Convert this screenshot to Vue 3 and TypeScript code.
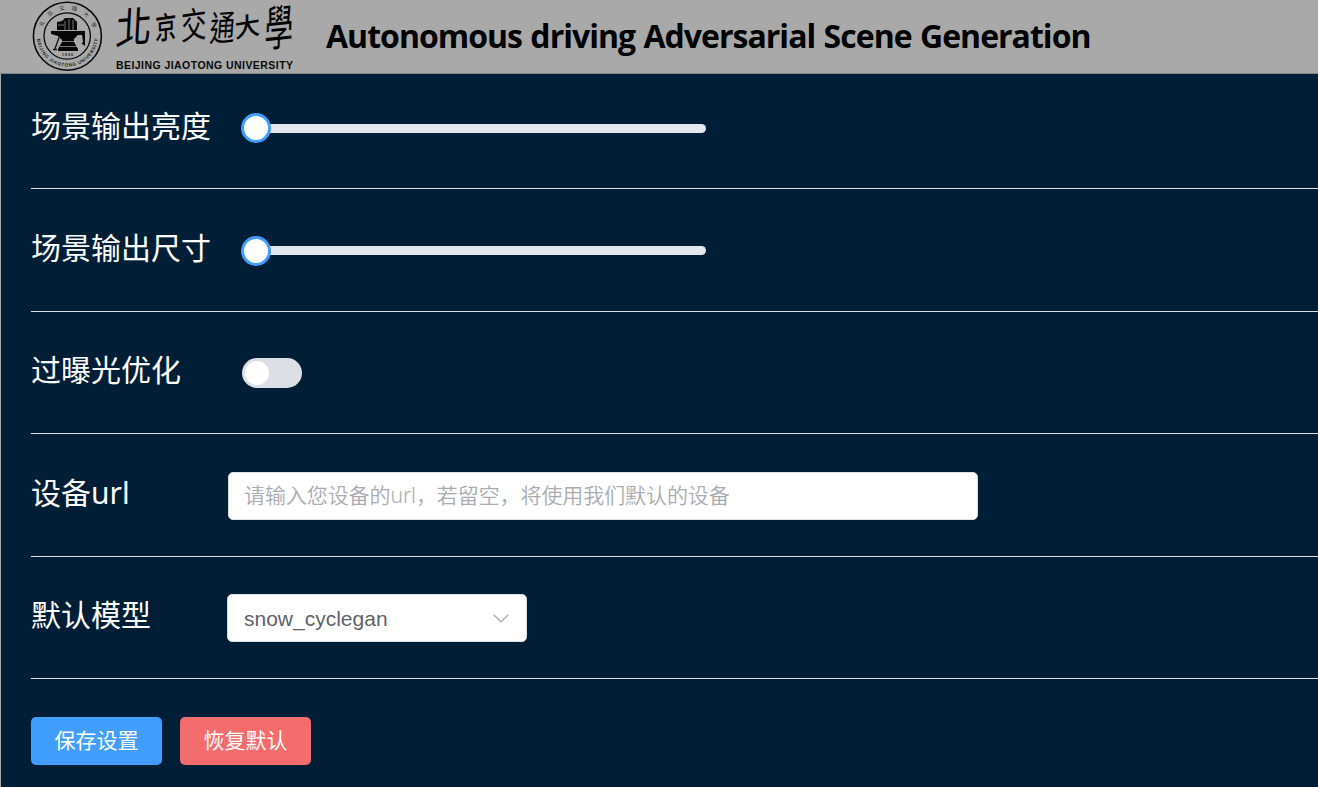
<script setup lang="ts">
import { ref } from 'vue'

const brightness = ref(0)
const size = ref(0)
const overexposure = ref(false)
const deviceUrl = ref('')
const model = ref('snow_cyclegan')

function save(): void {
  console.log(brightness.value, size.value, overexposure.value, deviceUrl.value, model.value)
}

function reset(): void {
  brightness.value = 0
  size.value = 0
  overexposure.value = false
  deviceUrl.value = ''
  model.value = 'snow_cyclegan'
}
</script>

<template>
  <div class="page">
    <header class="header">
      <svg class="logo" width="300" height="73" viewBox="0 0 300 73">
        <defs>
          <path id="seal-bottom" d="M36.9 36 A30.5 30.5 0 0 0 97.9 36" />
          <path id="seal-top" d="M41 36 A26.5 26.5 0 0 1 94 36" />
        </defs>
        <g fill="none" stroke="#0b0b0b">
          <circle cx="67.4" cy="36.2" r="34" stroke-width="1.6" />
          <circle cx="67.2" cy="36" r="23.2" stroke-width="1.3" />
        </g>
        <text class="seal-en"><textPath href="#seal-bottom" startOffset="3" textLength="90">BEIJING JIAOTONG UNIVERSITY</textPath></text>
        <text class="seal-cn"><textPath href="#seal-top" startOffset="9" textLength="66">北京交通大學</textPath></text>
        <g fill="#070707">
          <path d="M57 22 L62 21 L65 18 L73 18 L77 22 L77 30 L57 30 Z" />
          <path d="M51 31 H85 V35 H78 L74 39 V42 L78 49 V51 H58 V49 L62 42 V40 L58 36 L51 34 Z" />
          <path d="M82 34 H85 V46 L81.5 43.5 L83 42 Z" />
        </g>
        <path d="M60 35 L54.5 50 M53 49.5 H57" stroke="#111" stroke-width="1.3" fill="none" />
        <path d="M65 21 V30 M69 19 V30 M73 20 V30 M62 41.5 H75 M60 46.5 H77 M58 25 H64" stroke="#a9a9a9" stroke-width=".7" />
        <text x="62" y="55.6" class="year">1896</text>
        <g class="brush">
          <text transform="translate(115 44.5) rotate(-5) skewX(-8) scale(.88 1.04)" font-size="41">北</text>
          <text transform="translate(155 40) rotate(-8) skewX(-8) scale(.72 1)" font-size="30" font-weight="500">京</text>
          <text transform="translate(181 40) rotate(-8) skewX(-8) scale(.76 1.05)" font-size="34">交</text>
          <text transform="translate(209 41.5) rotate(-4) skewX(-8) scale(.72 1)" font-size="35">通</text>
          <text transform="translate(235 38) rotate(-10) skewX(-8) scale(.92 .9)" font-size="28" font-weight="500">大</text>
          <text transform="translate(264 47) rotate(-6) skewX(-8) scale(.6 1)" font-size="48">學</text>
        </g>
        <text x="116" y="69.4" textLength="177" class="wordmark">BEIJING JIAOTONG UNIVERSITY</text>
      </svg>
      <h1 class="title">Autonomous driving Adversarial Scene Generation</h1>
    </header>

    <main class="settings">
      <section class="row">
        <span class="label">场景输出亮度</span>
        <div class="slider" role="slider" :aria-valuenow="brightness"><i class="thumb"></i></div>
      </section>
      <section class="row">
        <span class="label">场景输出尺寸</span>
        <div class="slider" role="slider" :aria-valuenow="size"><i class="thumb"></i></div>
      </section>
      <section class="row">
        <span class="label">过曝光优化</span>
        <button class="switch" role="switch" :aria-checked="overexposure" @click="overexposure = !overexposure"><i class="knob"></i></button>
      </section>
      <section class="row">
        <span class="label narrow">设备url</span>
        <input v-model="deviceUrl" class="url" placeholder="请输入您设备的url，若留空，将使用我们默认的设备" />
      </section>
      <section class="row">
        <span class="label narrower">默认模型</span>
        <div class="select">
          <span>{{ model }}</span>
          <svg width="16" height="9" viewBox="0 0 16 9"><path d="M.6 .8 L8 7.8 L15.4 .8" fill="none" stroke="#a8abb2" stroke-width="1.2" /></svg>
        </div>
      </section>
      <div class="actions">
        <button class="btn primary" @click="save">保存设置</button>
        <button class="btn danger" @click="reset">恢复默认</button>
      </div>
    </main>
  </div>
</template>

<style>
body {
  margin: 0;
  overflow: hidden;
}
</style>

<style scoped>
.page {
  height: 787px;
  box-sizing: border-box;
  display: flex;
  flex-direction: column;
  background: #001e35;
  font-family: "Noto Sans", "Noto Sans CJK SC", sans-serif;
  overflow: hidden;
}
.header {
  flex: none;
  height: 74px;
  box-sizing: border-box;
  display: flex;
  background: #a9a9a9;
  border-bottom: 1px solid #808488;
}
.logo {
  flex: none;
  display: block;
}
.seal-en {
  font: 700 4.6px "Liberation Sans", sans-serif;
  fill: #222;
}
.seal-cn {
  font: 5.5px "Noto Sans CJK TC", sans-serif;
  fill: #333;
}
.year {
  font: 700 3.6px "Liberation Sans", sans-serif;
  letter-spacing: 1px;
  fill: #222;
}
.brush {
  font-family: "Noto Sans CJK TC", sans-serif;
  fill: #050505;
}
.wordmark {
  font: 700 10.5px "Liberation Sans", sans-serif;
  fill: #0a0a0a;
}
.title {
  margin: 0 0 0 26px;
  font-family: "Open Sans", "Noto Sans", sans-serif;
  font-size: 32px;
  font-weight: 700;
  line-height: 72px;
  letter-spacing: -0.98px;
  word-spacing: 1px;
  white-space: nowrap;
  color: #000;
}
.settings {
  flex: 1;
  padding-left: 30px;
  border-left: 1px solid #a9a9a9;
}
.row {
  height: 122.5px;
  box-sizing: border-box;
  padding-top: 2px;
  display: flex;
  align-items: center;
  border-bottom: 1px solid #dcdfe6;
}
.row:first-child {
  height: 115px;
  padding-top: 0;
  padding-bottom: 6px;
}
.label {
  flex: none;
  width: 211px;
  height: 44px;
  margin-top: -6px;
  font-size: 30px;
  line-height: 44px;
  color: #fff;
  white-space: nowrap;
}
.row:first-child .label {
  margin-top: -4px;
}
.narrow {
  width: 197px;
}
.narrower {
  width: 196px;
}
.slider {
  width: 464px;
  height: 9px;
  border-radius: 5px;
  background: #e4e7ed;
  display: flex;
  align-items: center;
}
.thumb {
  flex: none;
  width: 30px;
  height: 30px;
  box-sizing: border-box;
  margin-left: -1px;
  border: 3px solid #409eff;
  border-radius: 50%;
  background: #fff;
}
.switch {
  width: 60px;
  height: 30px;
  padding: 3px;
  border: 0;
  border-radius: 15px;
  background: #dcdfe6;
}
.knob {
  display: block;
  width: 24px;
  height: 24px;
  border-radius: 50%;
  background: #fff;
}
.url,
.select {
  height: 48px;
  box-sizing: border-box;
  border: 1px solid #dcdfe6;
  border-radius: 5px;
  background: #fff;
  font-size: 21px;
  padding: 0 16px;
}
.url {
  width: 750px;
  padding: 0 15px 1px;
  font-family: "Noto Sans", "Noto Sans CJK SC", sans-serif;
  font-weight: 350;
  letter-spacing: -0.08px;
}
.url::placeholder {
  color: #a8abb2;
}
.select {
  width: 300px;
  padding-top: 1px;
  padding-right: 17px;
  display: flex;
  align-items: center;
  justify-content: space-between;
  font-family: "Liberation Sans", sans-serif;
  color: #606266;
}
.actions {
  display: flex;
  gap: 18px;
  padding-top: 38px;
}
.btn {
  width: 131px;
  height: 48px;
  padding: 0 0 4px;
  border: 0;
  border-radius: 5px;
  font-family: "Noto Sans CJK SC", sans-serif;
  font-size: 21px;
  line-height: 44px;
  color: #fff;
}
.primary {
  background: #409eff;
}
.danger {
  background: #f56c6c;
}
</style>
